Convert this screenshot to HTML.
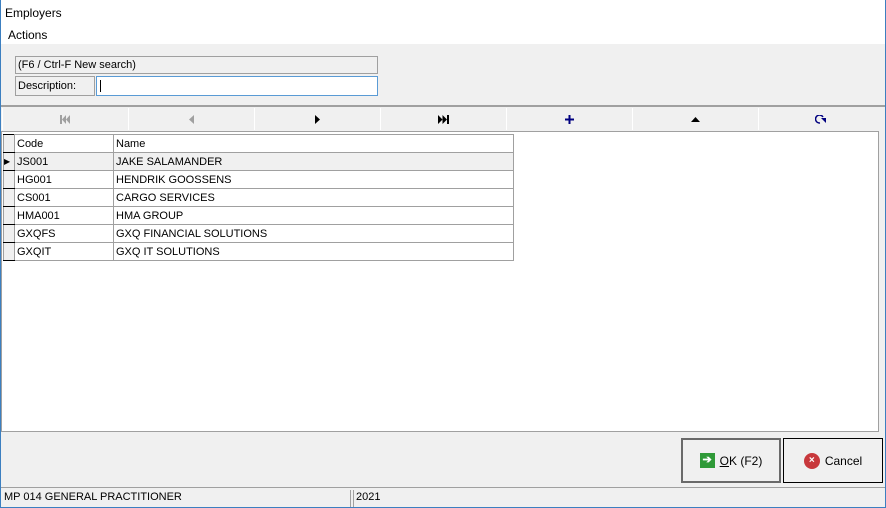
<!DOCTYPE html><html><head><style>
*{margin:0;padding:0;box-sizing:border-box}
body{width:886px;height:508px;position:relative;background:#f0f0f0;font-family:"Liberation Sans",sans-serif;font-size:11px;color:#000;overflow:hidden}
.a{position:absolute}
.nb{position:absolute;top:108px;height:22px;width:125px;background:#f0f0f0;border-left:1px solid #fff;display:flex;align-items:center;justify-content:center}
table{border-collapse:collapse;position:absolute;left:3px;top:134px}
td{border:1px solid #a0a0a0;height:18px;padding:0 2px;font-size:11px;white-space:nowrap}
td.i{width:11px;background:#f0f0f0;border-color:#000 #a0a0a0;padding:0}
</style></head><body>
<div class="a" style="left:0;top:0;width:886px;height:44px;background:#fff"></div>
<div class="a" style="left:0;top:0;width:1px;height:508px;background:#3c7fc0"></div>
<div class="a" style="right:0;top:0;width:1px;height:508px;background:#3c7fc0"></div>
<div class="a" style="left:0;bottom:0;width:886px;height:1px;background:#3c7fc0"></div>
<div class="a" style="left:5px;top:6px;font-size:12px">Employers</div>
<div class="a" style="left:8px;top:28px;font-size:12px">Actions</div>
<div class="a" style="left:15px;top:56px;width:363px;height:18px;border:1px solid #a0a0a0;padding:2px 2px">(F6 / Ctrl-F New search)</div>
<div class="a" style="left:15px;top:76px;width:80px;height:20px;border:1px solid #a0a0a0;padding:3px 2px">Description:</div>
<div class="a" style="left:96px;top:76px;width:282px;height:20px;border:1px solid #5a9bd5;background:#fff"><div style="position:absolute;left:3px;top:3px;width:1px;height:12px;background:#000"></div></div>
<div class="a" style="left:1px;top:105px;width:884px;height:2px;background:#a0a0a0"></div>
<div class="nb" style="left:2px"><svg width="10" height="9"><rect x="0" y="0" width="2" height="9" fill="#a0a0a0"/><path d="M6 0V9L2 4.5ZM10 0V9L6 4.5Z" fill="#a0a0a0"/></svg></div>
<div class="nb" style="left:128px"><svg width="5" height="9"><path d="M5 0V9L0 4.5Z" fill="#a0a0a0"/></svg></div>
<div class="nb" style="left:254px"><svg width="5" height="9"><path d="M0 0V9L5 4.5Z" fill="#000"/></svg></div>
<div class="nb" style="left:380px"><svg width="11" height="9"><path d="M0 0V9L4.5 4.5ZM4.5 0V9L9 4.5Z" fill="#000"/><rect x="9" y="0" width="2" height="9" fill="#000"/></svg></div>
<div class="nb" style="left:506px"><svg width="9" height="9"><path d="M3.5 0h2v9h-2zM0 3.5h9v2H0z" fill="#000080"/></svg></div>
<div class="nb" style="left:632px"><svg width="9" height="5"><path d="M0 5H9L4.5 0Z" fill="#000"/></svg></div>
<div class="nb" style="left:758px"><svg width="12" height="9"><path d="M8 2A4 4 0 1 0 5 8" stroke="#000080" stroke-width="1.5" fill="none"/><path d="M6 3h5V8Z" fill="#000080"/></svg></div>
<div class="a" style="left:1px;top:131px;width:878px;height:301px;background:#fff;border:1px solid #a0a0a0"></div>
<table>
<tr><td class="i"></td><td style="width:99px">Code</td><td style="width:400px">Name</td></tr>
<tr style="background:#f0f0f0"><td class="i" style="font-size:8px">▶</td><td>JS001</td><td>JAKE SALAMANDER</td></tr>
<tr><td class="i"></td><td>HG001</td><td>HENDRIK GOOSSENS</td></tr>
<tr><td class="i"></td><td>CS001</td><td>CARGO SERVICES</td></tr>
<tr><td class="i"></td><td>HMA001</td><td>HMA GROUP</td></tr>
<tr><td class="i"></td><td>GXQFS</td><td>GXQ FINANCIAL SOLUTIONS</td></tr>
<tr><td class="i"></td><td>GXQIT</td><td>GXQ IT SOLUTIONS</td></tr>
</table>
<div class="a" style="left:681px;top:438px;width:100px;height:45px;border:2px solid #6a6a6a;display:flex;align-items:center;justify-content:center;font-size:12px"><span style="display:inline-block;width:15px;height:15px;background:#2f9a38;color:#fff;font-size:11px;font-weight:bold;text-align:center;line-height:15px;margin-right:5px">➔</span><u>O</u>K (F2)</div>
<div class="a" style="left:783px;top:438px;width:100px;height:45px;border:1px solid #000;display:flex;align-items:center;justify-content:center;font-size:12px"><span style="display:inline-block;width:16px;height:16px;border-radius:50%;background:#c8383c;color:#fff;font-size:10px;font-weight:bold;text-align:center;line-height:16px;margin-right:5px">×</span>Cancel</div>
<div class="a" style="left:1px;top:487px;width:884px;height:1px;background:#a0a0a0"></div>
<div class="a" style="left:2px;top:490px;width:349px;height:17px;border-right:1px solid #a0a0a0;padding:1px 2px;font-size:11px">MP 014 GENERAL PRACTITIONER</div>
<div class="a" style="left:353px;top:490px;width:530px;height:17px;border-left:1px solid #a0a0a0;padding:1px 2px;font-size:11px">2021</div>
</body></html>
